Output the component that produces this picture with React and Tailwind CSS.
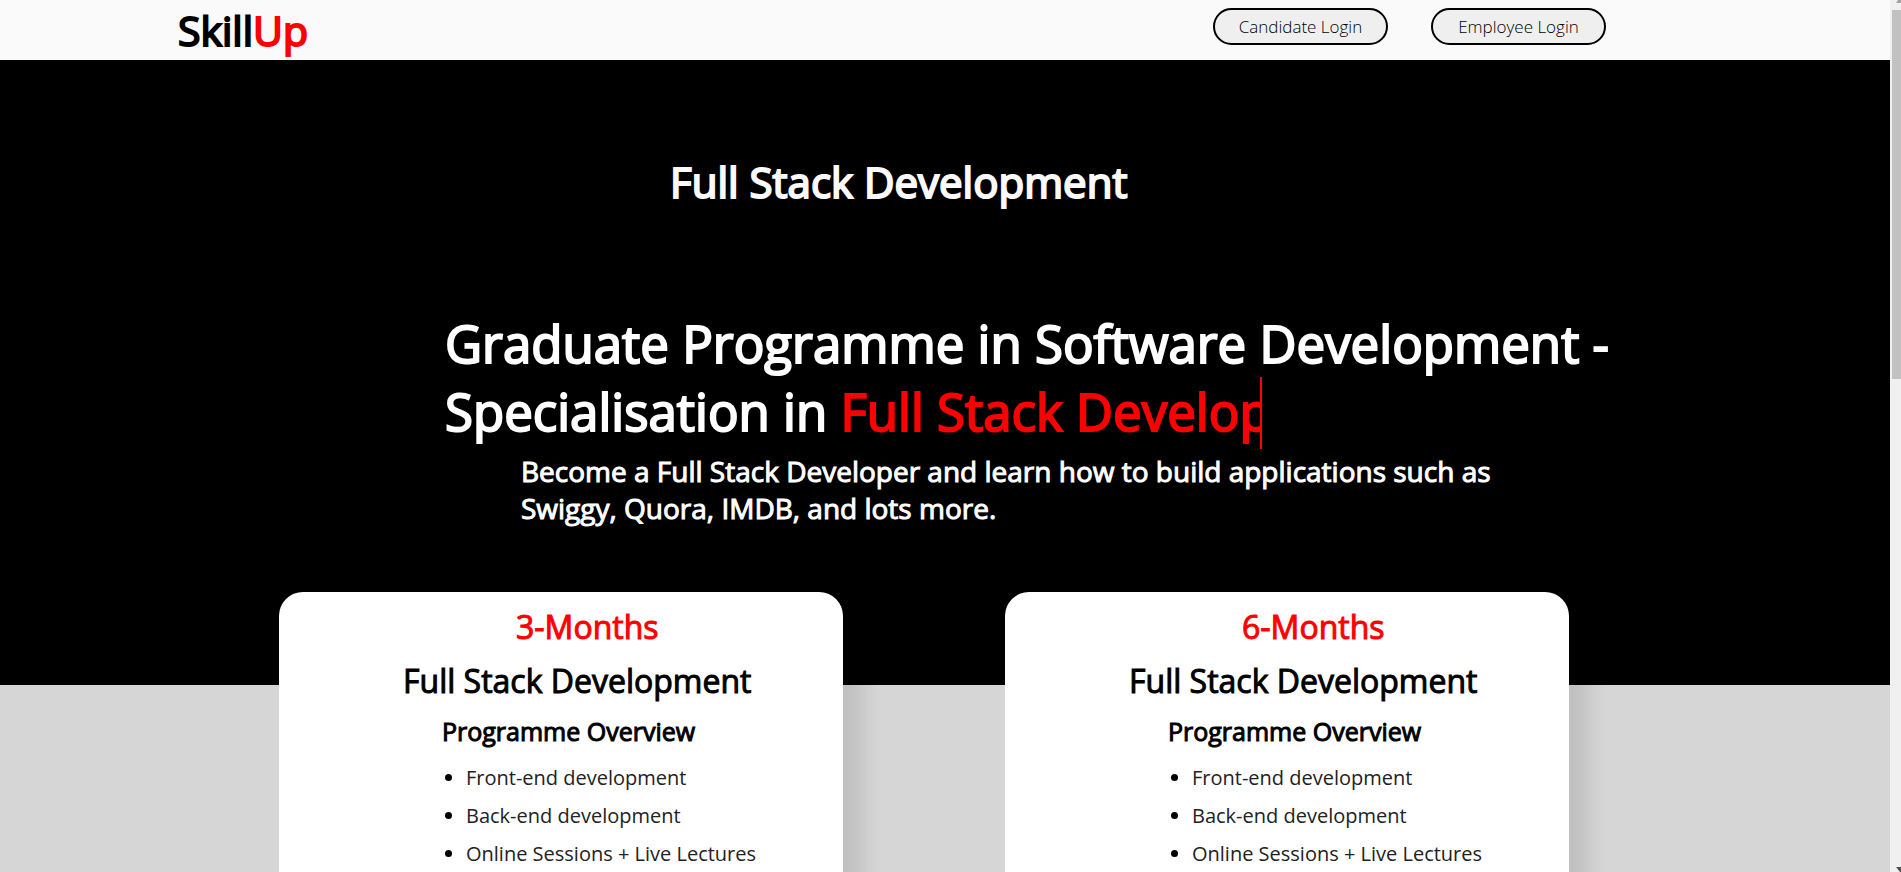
import React from "react";

const ITEMS = ["Front-end development", "Back-end development", "Online Sessions + Live Lectures"];

function Header() {
  return (
    <header className="flex h-[60px] shrink-0 items-center justify-between bg-[#fafafa] pr-[284px] pl-[178px]">
      <a href="#" className="text-[41px] leading-[54px] [-webkit-text-stroke-width:2px]">
        Skill<span className="text-[#ff0000]">Up</span>
      </a>
      <div className="mb-2 flex gap-[43px]">
        {["Candidate Login", "Employee Login"].map((label) => (
          <button
            key={label}
            type="button"
            className="h-[37px] w-[175px] rounded-[20px] border-2 border-black bg-[#efefef] pt-px text-[17px] leading-[23px] font-light"
          >
            {label}
          </button>
        ))}
      </div>
    </header>
  );
}

function Hero() {
  return (
    <section className="shrink-0 bg-black pt-[93px] pb-[158px] text-white">
      <h1 className="ml-[670px] text-[42px] leading-[57px] text-[#fafafa] [-webkit-text-stroke-width:2px]">
        Full Stack Development
      </h1>
      <h2 className="mt-[99px] ml-[445px] max-w-[1200px] text-[51px] leading-[68px] [-webkit-text-stroke-width:2px]">
        Graduate Programme in Software Development - Specialisation in{" "}
        <span className="inline-block h-[72px] w-[421px] overflow-hidden border-r-2 border-[#ff0000] align-top whitespace-nowrap text-[#ff0000]">
          Full Stack Development
        </span>
      </h2>
      <p className="mt-[4px] ml-[521px] max-w-[1000px] text-[28px] leading-[37px] [-webkit-text-stroke-width:1px]">
        Become a Full Stack Developer and learn how to build applications such as Swiggy, Quora, IMDB, and lots more.
      </p>
    </section>
  );
}

function Card({ months }) {
  return (
    <article className="-mt-[93px] w-[564px] rounded-[24px] bg-white pt-[13px] pb-16 shadow-[20px_20px_20px_rgba(0,0,0,0.1)]">
      <h3 className="ml-[237px] text-[32px] leading-[44px] text-[#ff0000] [-webkit-text-stroke-width:1px]">
        {months}
      </h3>
      <h3 className="mt-[10px] ml-[124px] text-[32px] leading-[44px] [-webkit-text-stroke-width:1px]">
        Full Stack Development
      </h3>
      <h4 className="mt-[11px] ml-[163px] text-[25px] leading-[34px] [-webkit-text-stroke-width:1px]">
        Programme Overview
      </h4>
      <ul className="mt-4 ml-[187px] flex list-disc flex-col gap-[10px] text-[20px] leading-[28px] text-[#222222] marker:text-black">
        {ITEMS.map((item) => (
          <li key={item}>{item}</li>
        ))}
      </ul>
    </article>
  );
}

function Scrollbar() {
  return (
    <div aria-hidden="true" className="flex w-[11px] shrink-0 flex-col items-end justify-between bg-[#f0f0f0]">
      <div className="flex w-full flex-col items-end">
        <svg className="h-[10px] w-[5px]" viewBox="0 0 5 10">
          <path d="M5 0H2L0 3H5Z" fill="#a3a3a3" />
        </svg>
        <div className="h-[369px] w-[9px] bg-[#c1c1c1]" />
      </div>
      <svg className="h-[5px] w-[5px]" viewBox="0 0 5 5">
        <path d="M0 0H5V5H4Z" fill="#505050" />
      </svg>
    </div>
  );
}

export default function App() {
  return (
    <div className="flex h-screen overflow-hidden font-['Open_Sans',sans-serif] text-black">
      <main className="flex min-w-0 flex-1 flex-col overflow-hidden bg-[#d6d6d6]">
        <Header />
        <Hero />
        <section className="flex gap-[162px] pl-[279px]">
          <Card months="3-Months" />
          <Card months="6-Months" />
        </section>
      </main>
      <Scrollbar />
    </div>
  );
}
